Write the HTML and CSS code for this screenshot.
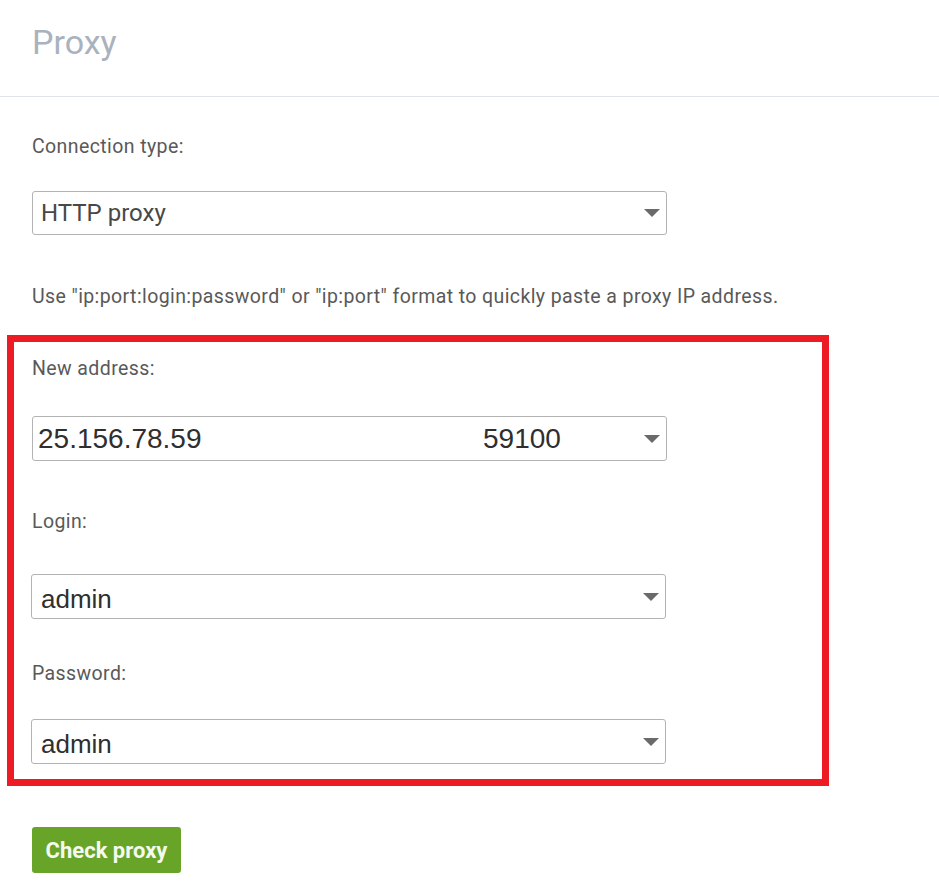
FILE: index.html
```html
<!DOCTYPE html>
<html>
<head>
<meta charset="utf-8">
<link rel="stylesheet" href="styles.css">
</head>
<body>
<header class="page-header">
  <h1 class="title">Proxy</h1>
</header>
<main class="content">
  <div class="label label-conn">Connection type:</div>
  <div class="select select-conn">
    <span class="value value-roboto">HTTP proxy</span>
    <span class="arrow"></span>
  </div>
  <p class="hint">Use "ip:port:login:password" or "ip:port" format to quickly paste a proxy IP address.</p>
  <section class="highlight">
    <div class="label label-addr">New address:</div>
    <div class="select select-addr">
      <span class="value value-ip">25.156.78.59</span>
      <span class="value value-port">59100</span>
      <span class="arrow"></span>
    </div>
    <div class="label label-login">Login:</div>
    <div class="select select-login">
      <span class="value value-admin">admin</span>
      <span class="arrow"></span>
    </div>
    <div class="label label-pass">Password:</div>
    <div class="select select-pass">
      <span class="value value-admin">admin</span>
      <span class="arrow"></span>
    </div>
  </section>
  <button class="btn-check">Check proxy</button>
</main>
</body>
</html>
```

FILE: styles.css
```css
html, body {
  margin: 0;
  padding: 0;
  background: #ffffff;
  font-family: Roboto, "Liberation Sans", Arial, sans-serif;
}

.page-header {
  height: 97px;
  border-bottom: 1px solid #dfe3e8;
  padding-left: 32px;
  box-sizing: border-box;
}

.title {
  margin: 0;
  padding-top: 22px;
  font-size: 34px;
  line-height: 40px;
  font-weight: 400;
  color: #a9b2bd;
}

.content {
  padding-left: 32px;
}

.label {
  font-size: 19.5px;
  letter-spacing: 0.4px;
  line-height: 20px;
  color: #595959;
}

.label-conn { padding-top: 40px; }
.select-conn { margin-top: 34px; }

.hint {
  margin: 52px 0 0 0;
  font-size: 19.5px;
  letter-spacing: 0.4px;
  line-height: 20px;
  color: #595959;
}

.select {
  width: 635px;
  height: 45px;
  box-sizing: border-box;
  border: 1px solid #b3b3b3;
  border-radius: 3px;
  display: flex;
  align-items: center;
  position: relative;
  background: #fff;
}

.select-conn { height: 44px; }

.value {
  color: #444444;
}

.value-roboto {
  font-family: Roboto, sans-serif;
  font-size: 24px;
  padding-left: 8px;
  color: #484848;
}

.value-ip, .value-port {
  font-family: "Liberation Sans", Arial, sans-serif;
  font-size: 28px;
  color: #2f2f2f;
}

.value-ip {
  padding-left: 5px;
  width: 445px;
}

.value-admin {
  font-family: "Liberation Sans", Arial, sans-serif;
  font-size: 26px;
  color: #2f2f2f;
  padding-left: 9px;
  padding-top: 6px;
}

.arrow {
  margin-left: auto;
  margin-right: 6px;
  width: 0;
  height: 0;
  border-left: 8px solid transparent;
  border-right: 8px solid transparent;
  border-top: 8px solid #6a6a6a;
}

.highlight {
  margin: 28px 0 0 -25px;
  width: 822px;
  box-sizing: border-box;
  border: 7px solid #ed1c24;
  padding: 17px 0 15px 18px;
}

.select-addr { margin-top: 37px; }
.label-login { margin-top: 51px; }
.select-login { margin-top: 42px; margin-left: -1px; }
.label-pass { margin-top: 45px; }
.select-pass { margin-top: 35px; margin-left: -1px; }

.btn-check {
  display: block;
  margin-top: 41px;
  width: 149px;
  height: 46px;
  padding: 0;
  border: none;
  border-radius: 3px;
  background: #68a428;
  color: #f4faee;
  font-family: Roboto, sans-serif;
  font-weight: 700;
  font-size: 22px;
}
```
